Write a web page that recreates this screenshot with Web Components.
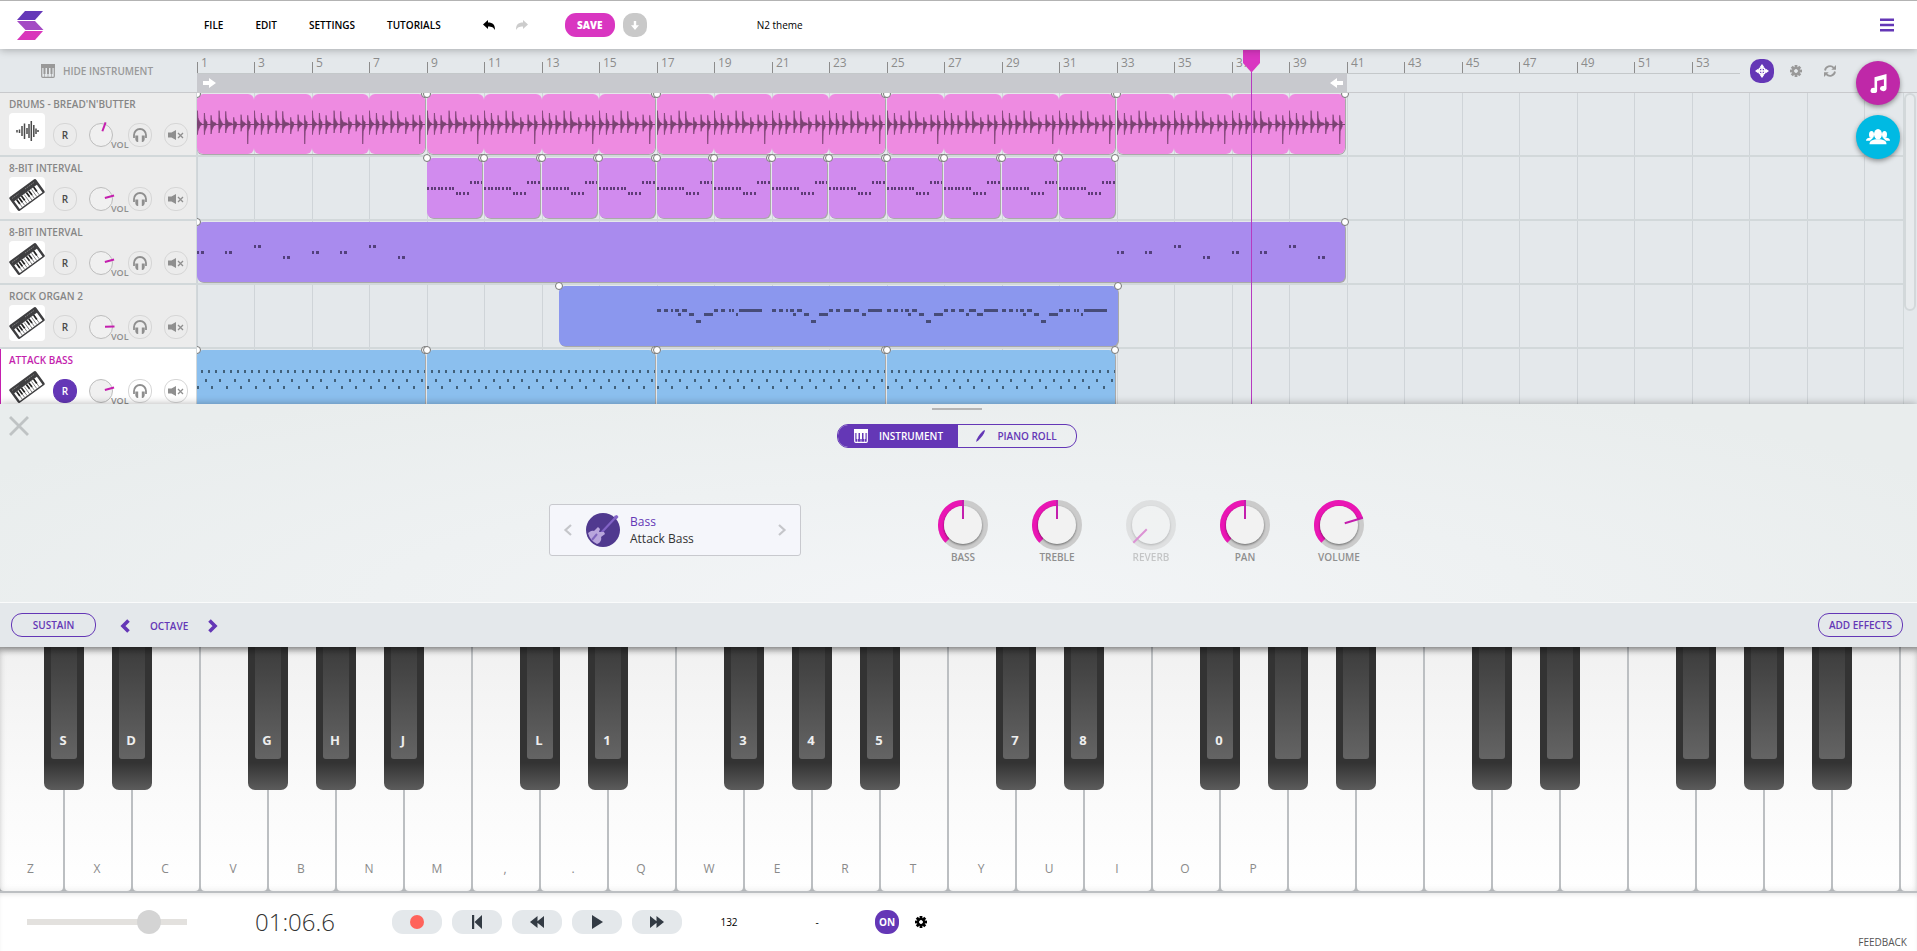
<!DOCTYPE html>
<html lang="en">
<head>
<meta charset="utf-8">
<title>N2 theme</title>
<style>
  html, body { margin: 0; }
  body {
    --violet: #6437b6; --magenta: #d936c1; --line: #d2d8da; --surface: #e4e8eb;
    font: 600 10px/14px "Open Sans", "Noto Sans", sans-serif; color: #000; background: #fff;
  }
</style>
</head>
<body>
<daw-app></daw-app>
<script>
const base = `
  *, *::before { box-sizing: border-box; }
  button, input { font: inherit; color: inherit; background: none; border: 0; padding: 0; margin: 0; }
  button { cursor: pointer; }
  svg { display: block; }
`;

/* Defines an element whose shadow root is rendered once from its attributes. */
function define(name, css, render) {
  customElements.define(name, class extends HTMLElement {
    connectedCallback() {
      if (this.shadowRoot) return;
      const root = this.attachShadow({ mode: 'open' });
      const tpl = document.createElement('template');
      tpl.innerHTML = `<style>${base}${css}</style>${render(this)}`;
      root.append(tpl.content.cloneNode(true));
    }
  });
}

/* ---------- icons ---------- */
const gear = (r) => {
  let teeth = '';
  for (let a = 0; a < 360; a += 45) teeth += `<rect x="-1.4" y="-6" width="2.8" height="4" transform="rotate(${a})"/>`;
  return `<g transform="translate(6 6)">${teeth}<circle r="${r}" fill="none" stroke="currentColor" stroke-width="2"/></g>`;
};
const icons = {
  logo: [27, 29, `<path fill="#6538b8" d="M8 0h18l-8 9H0z"/><path fill="#a44ac4" d="M0 10h18l8.500 9h-18z"/><path fill="#d936bb" d="M8 20h18l-8 9H0z"/>`],
  undo: [12, 10, `<path d="M5 0v2.500c5 0 7 2 7 7.500-1.500-2.500-3-3.600-7-3.600V9L0 4.500z"/>`],
  redo: [12, 10, `<path d="M7 0v2.500C2 2.500 0 4.500 0 10c1.500-2.500 3-3.600 7-3.600V9l5-4.500z"/>`],
  down: [8, 9, `<path d="M2.800 0h2.400v4.200H8L4 9 0 4.200h2.800z"/>`],
  bars: [14, 14, `<path d="M0 .5h14v2.500H0zM0 5.700h14v2.500H0zM0 11h14v2.500H0z"/>`],
  keys: [14, 14, `<rect x=".7" y=".7" width="12.600" height="12.600" rx="1" fill="none" stroke="currentColor" stroke-width="1.200"/><path d="M0 0h14v4H0zM2.500 4h2v6h-2zM6 4h2v6H6zM9.500 4h2v6h-2z"/><path d="M3.500 9v4M7 9v4M10.500 9v4" stroke="currentColor" stroke-width=".6"/>`],
  right: [13, 10, `<path d="M0 3h6V0l7 5-7 5V7H0z"/>`],
  left: [13, 10, `<path d="M13 3H7V0L0 5l7 5V7h6z"/>`],
  wave: [36, 36, `<g stroke="#4a4a4a" stroke-width="1.500" fill="none"><path d="M8 17v2.500M10.500 16.500V20M13 13v10M15.500 10.500V26M18 15v6M20 11v14M22.300 8v20M24.800 12v12M27 15.500V21M29 17v2"/></g>`],
  synth: [36, 36, `<g transform="rotate(-36 18 18)"><rect x="1.500" y="9.500" width="33" height="17" rx="1.500" fill="#3e3e40"/><rect x="4" y="15.500" width="28" height="9.500" fill="#fff"/><path stroke="#3e3e40" stroke-width=".6" d="M7 16v9M10 16v9M13 16v9M16 16v9M19 16v9M22 16v9M25 16v9M28 16v9"/><path stroke="#222" stroke-width="1.700" d="M7 15.500V21M10 15.500V21M13 15.500V21M19 15.500V21M22 15.500V21M28 15.500V21"/><path stroke="#999" stroke-width=".7" d="M4 12h8M20 12h11" stroke-dasharray="1.500 1"/></g>`],
  phones: [14, 14, `<path fill="none" stroke="currentColor" stroke-width="1.800" d="M1 10V7a6 6 0 0 1 12 0v3"/><path d="M2.300 7.500h2.900V14H4.600C3.300 14 2.300 12.500 2.300 11zM11.700 7.500H8.800V14h.6c1.300 0 2.300-1.500 2.300-3z"/>`],
  mute: [16, 10, `<path d="M0 2.500h3.500L8 0v10L3.500 7.500H0z"/><path stroke="currentColor" stroke-width="1.300" d="M10 3l5 5M15 3l-5 5"/>`],
  target: [14, 14, `<circle cx="7" cy="7" r="3.200" fill="none" stroke="currentColor" stroke-width="1.500"/><path d="M7 0l2 2.800-1.300 1.500v5.400L9 11.200 7 14l-2-2.800 1.300-1.500V4.300L5 2.800z"/><path d="M0 7l2.800-2 1.500 1.300h5.400L11.200 5 14 7l-2.800 2-1.500-1.300H4.300L2.800 9z"/>`],
  gear: [12, 12, gear(3)],
  sync: [12, 12, `<path fill="none" stroke="currentColor" stroke-width="1.800" d="M1 5.500a5 5 0 0 1 8.700-2.600M11 6.500a5 5 0 0 1-8.700 2.600"/><path d="M12 0v4.800H7.300zM0 12V7.200h4.700z"/>`],
  music: [18, 19, `<path d="M5.500 3.200 17.500 0v14.200a3.300 2.600 0 1 1-2.600-2.200V5.200L8.100 7v9.200a3.300 2.600 0 1 1-2.600-2.300z"/>`],
  group: [24, 16, `<ellipse cx="12" cy="5.200" rx="4" ry="5.200"/><path d="M3.500 15.200c0-3.600 3-5 8.500-5s8.500 1.400 8.500 5z"/><ellipse cx="5.500" cy="5.500" rx="2.500" ry="3.600"/><path d="M0 11.800c0-2 2-3.200 6-3.200h1.500L4 11.800z"/><ellipse cx="18.500" cy="5.500" rx="2.500" ry="3.600"/><path d="M24 11.800c0-2-2-3.200-6-3.200h-1.500l3.500 3.200z"/>`],
  close: [20, 20, `<path stroke="currentColor" stroke-width="2.800" stroke-linecap="square" d="M2 2l16 16M18 2L2 18"/>`],
  pen: [9, 12, `<path d="M8.300 0l.7.800C8 4 5.500 7.500 2.500 10.200L0 12l.8-2.800C2.500 5.500 5.500 2 8.300 0z"/>`],
  prev: [8, 12, `<path fill="none" stroke="currentColor" stroke-width="2.200" d="M7 1L1.500 6 7 11"/>`],
  next: [8, 12, `<path fill="none" stroke="currentColor" stroke-width="2.200" d="M1 1l5.500 5L1 11"/>`],
  octdown: [10, 14, `<path fill="none" stroke="currentColor" stroke-width="3.600" d="M8.500 1.500L3 7l5.500 5.500"/>`],
  octup: [10, 14, `<path fill="none" stroke="currentColor" stroke-width="3.600" d="M1.500 1.500L7 7l-5.500 5.500"/>`],
  bass: [34, 34, `<circle cx="17" cy="17" r="17" fill="#50398f"/><path d="M15 20L30 4" stroke="#8263c6" stroke-width="2.200"/><path d="M28 3l3-1 1.500 2-2.500 3z" fill="#8263c6"/><path fill="#b9a6dc" d="M2 20c2-1 3-3 6-2l4-4 2 2-1 3 5 0 1 2-4 3c1 3-1 6-4 7A17 17 0 0 1 2 20z"/><path d="M6 27l5-6" stroke="#8066bd" stroke-width="2"/>`],
  rec: [14, 14, `<circle cx="7" cy="7" r="7" fill="#ff635b"/>`],
  start: [10, 14, `<path d="M0 0h2.200v14H0zM10 0v14L2.500 7z"/>`],
  rew: [14, 14, `<path d="M7.500 1v12L0 7zM14 1v12L6.500 7z"/>`],
  play: [12, 14, `<path d="M1 0v14L12 7z"/>`],
  ffwd: [14, 14, `<path d="M0 1v12l7.500-6zM6.500 1v12L14 7z"/>`],
};
define('ui-icon', `:host { display: block; flex: none; } svg { fill: currentColor; overflow: visible; }`, el => {
  const [w, h, art] = icons[el.getAttribute('name')];
  return `<svg width="${w}" height="${h}" viewBox="0 0 ${w} ${h}" aria-hidden="true">${art}</svg>`;
});

/* ---------- header ---------- */
define('app-header', `
  :host { display: flex; align-items: center; height: 49px; background: #fff; border-top: 1px solid #b3b3b3;
          box-shadow: 0 1px 8px rgba(0,0,0,.28); position: relative; z-index: 5; padding: 0 23px 0 17px; }
  .brand { width: 187px; }
  nav { display: flex; gap: 32px; }
  a { color: #000; text-decoration: none; }
  .history { display: flex; gap: 21px; margin: 0 37px 0 42px; }
  .redo { color: #ccc; }
  .save { width: 50px; height: 24px; border-radius: 11px; background: var(--magenta); color: #fff; font-weight: 800; }
  .get { width: 24px; height: 24px; margin-left: 8px; border-radius: 10px; background: #c9c9c9; color: #fff; display: grid; place-items: center; }
  input { width: 200px; margin-left: 110px; font-weight: 400; }
  .menu { margin-left: auto; color: var(--violet); }
`, () => `
  <div class="brand"><ui-icon name="logo"></ui-icon></div>
  <nav><a href="#file">FILE</a><a href="#edit">EDIT</a><a href="#settings">SETTINGS</a><a href="#tutorials">TUTORIALS</a></nav>
  <div class="history"><button aria-label="Undo"><ui-icon name="undo"></ui-icon></button><button class="redo" aria-label="Redo"><ui-icon name="redo"></ui-icon></button></div>
  <button class="save">SAVE</button>
  <button class="get" aria-label="Download"><ui-icon name="down"></ui-icon></button>
  <input type="text" value="N2 theme" aria-label="Project title">
  <button class="menu" aria-label="Menu"><ui-icon name="bars"></ui-icon></button>
`);

/* ---------- ruler: two bars take 57px and 58px in turn ---------- */
define('time-ruler', `
  :host { display: flex; height: 44px; background: var(--surface); }
  .hide { width: 197px; display: flex; align-items: center; justify-content: center; gap: 8px; color: #999;
          border-bottom: 1px solid #c8c9cc; padding-right: 3px; }
  .scale { flex: 1; min-width: 0; overflow: hidden; border-bottom: 1px solid #c8c9cc; }
  .bars { display: grid; grid-template-columns: repeat(14, 57px 58px); height: 25px; border-bottom: 1px solid #c4c8ca; }
  .bars span { border-left: 1px solid transparent; padding: 6px 0 0 3px; font: 400 12px/16px "Open Sans", sans-serif; color: #8c8c8c;
               background: linear-gradient(#8c8c8c, #8c8c8c) 0 100% / 1px 11px no-repeat; background-origin: border-box; }
  .loop { width: 1150px; height: 18px; background: #c8c9ce; color: #fff; display: flex; justify-content: space-between; align-items: center; padding: 0 4px 0 6px; }
  .tools { width: 177px; display: flex; gap: 15px; padding: 10px 0 0 10px; color: #999; border-bottom: 1px solid #c8c9cc; }
  .tools button { width: 24px; height: 24px; margin-right: -5px; display: grid; place-items: center; }
  .tools .on { background: var(--violet); color: #fff; border-radius: 10px; }
`, () => {
  let bars = '';
  for (let n = 1; n <= 53; n += 2) bars += `<span>${n}</span>`;
  return `
  <button class="hide"><ui-icon name="keys"></ui-icon>HIDE INSTRUMENT</button>
  <div class="scale"><div class="bars">${bars}</div><div class="loop"><ui-icon name="right"></ui-icon><ui-icon name="left"></ui-icon></div></div>
  <div class="tools"><button class="on" aria-label="Snap"><ui-icon name="target"></ui-icon></button><button aria-label="Timeline settings"><ui-icon name="gear"></ui-icon></button><button aria-label="Loop"><ui-icon name="sync"></ui-icon></button></div>`;
});

/* ---------- track header ---------- */
define('track-head', `
  :host { display: block; width: 197px; height: 64px; background: #ececec; border-bottom: 2px solid var(--line);
          border-right: 1px solid var(--line); padding: 4px 0 0 9px; color: #868686; box-sizing: border-box; }
  :host([selected]) { background: #fff; box-shadow: inset 1px 0 #c41fae; color: #c41fae; }
  .row { display: flex; align-items: flex-start; margin-top: 2px; color: #8f8f8f; }
  .pic { background: #fff; border-radius: 4px; margin-right: 8px; }
  button, .dial { width: 24px; height: 24px; border-radius: 11px; border: 1px solid #d6d6d6; display: grid; place-items: center; margin-top: 10px; }
  .rec { color: #4a4a4a; }
  :host([selected]) .rec { background: var(--violet); border-color: var(--violet); color: #fff; }
  .dial { border: 0; margin-left: 12px; position: relative; }
  .dial svg { overflow: visible; }
  .dial input { position: absolute; inset: 0; width: 24px; opacity: 0; }
  .vol { font: 600 9px/10px "Open Sans", sans-serif; margin: 27px -1px 0 -2px; width: 18px; }
  .mute { margin-left: 12px; }
`, el => `
  <div>${el.getAttribute('name')}</div>
  <div class="row">
    <ui-icon class="pic" name="${el.getAttribute('icon')}"></ui-icon>
    <button class="rec" aria-label="Record arm">R</button>
    <div class="dial">
      <svg width="24" height="24" viewBox="-12 -12 24 24"><circle r="11.500" fill="#f0f0f0" stroke="#bdbdbd"/><path d="M0-4V-13.500" stroke="#c41fae" stroke-width="2" transform="rotate(${el.getAttribute('angle')})"/></svg>
      <input id="vol" type="range" min="-135" max="135" value="${el.getAttribute('angle')}">
    </div>
    <label class="vol" for="vol">VOL</label>
    <button aria-label="Solo"><ui-icon name="phones"></ui-icon></button>
    <button class="mute" aria-label="Mute"><ui-icon name="mute"></ui-icon></button>
  </div>`);

/* ---------- clips ---------- */
const hits = [[0,40,32,14],[21,33,32,9],[41,26,30,16],[65,40,27,12],[85,38,27,20],[109,20,30,10],[131,28,22,14],[151,26,60,8]];
function beat() {
  let d = '';
  for (const [x, up, down, tail] of hits) {
    const a = x / 3, e = (x + tail) / 3, f = Math.min(down, 32);
    d += `M${a} 30L${a + .4} ${30 - up / 3}l.5 ${up / 6}L${a + 1.6} ${30 - up / 9}L${a + 3} 28.300L${e} 29.300V30.700L${a + 3} 32L${a + 1.600} ${30 + f / 6}L${a + .9} ${30 + f / 4.500}L${a + .4} ${30 + down / 3}z`;
  }
  return `<svg width="58" height="60"><path d="M0 30.500h58" stroke="#7b4373" stroke-width="1"/><path d="${d}" fill="#7b4373" stroke="#7b4373" stroke-width=".7"/></svg>`;
}
const notes = (w, list, fill) => `<svg width="${w}" height="60" fill="${fill}">${list.map(([x, y, n]) => `<rect x="${x}" y="${y}" width="${n}" height="3"/>`).join('')}</svg>`;
const art = {
  riff: () => notes(56, Array.from({ length: 16 }, (_, i) => [Math.round(i * 3.6), i < 8 ? 29 : i < 12 ? 34 : 23, 2]), '#5f3b77'),
  pairs: () => {
    const out = [];
    [0, 920].forEach(o => [29, 29, 23, 34, 29, 29, 23, 34].forEach((y, i) => {
      const x = o + Math.floor(i * 28.750); out.push([x, y, 2], [x + 4, y, 3]);
    }));
    return notes(1148, out, '#53407c');
  },
  organ: () => {
    const head = [[0,9,0],[16,25,0],[32,36,0],[41,49,0],[48,55,1],[56,68,0],[72,84,1],[88,100,2],[106,127,1],[128,138,0],[144,154,0]];
    const tailA = [[162,165,0],[168,173,0],[177,182,1],[184,236,0]];
    const tails = [tailA, [[161,177,0],[184,195,0],[202,211,1],[216,248,0]], [[162,174,0],[178,185,1],[184,200,0],[202,215,1],[218,250,0]], tailA];
    const out = [];
    tails.forEach((t, p) => [...head, ...t].forEach(([a, b, r]) =>
      out.push([Math.round(98 + p * 115 + a * .446), [23, 27, 34][r], Math.max(2, Math.round((b - a) * .446))])));
    return notes(559, out, '#474c78');
  },
  bass: () => {
    const out = [];
    for (let i = 0; i < 32; i++) out.push([Math.round(4 + i * 7.187), 20, 2]);
    for (let i = 0; i < 16; i++) out.push([Math.round(8 + i * 14.375), 29, 2], [Math.round(i * 14.375), 36, 2]);
    return notes(229, out, '#41607a');
  },
};
define('sound-clip', `
  :host { display: block; height: 60px; position: relative; min-width: 0; margin-right: 2px; }
  .body { height: 60px; border-radius: 6px; background: var(--tint); box-shadow: 1px 1px 0 #a9a9a9; overflow: hidden; }
  :host([kind=bass]) .body { border-radius: 6px 6px 0 0; }
  :host([kind=drums]) .body { display: grid; grid-template-columns: 57px 58px 57px 1fr; background: none; box-shadow: 0 1px 0 #a9a9a9, 1px 0 0 #a9a9a9; }
  .part { background: var(--tint); border-radius: 6px; overflow: hidden; }
  i { position: absolute; top: -4px; width: 8px; height: 8px; border-radius: 50%; background: #fff; border: 1px solid #777; z-index: 1; }
  .a { left: -4px; } .b { right: -4px; }
`, el => {
  const kind = el.getAttribute('kind');
  const inner = kind === 'drums' ? `<div class="part">${beat()}</div>`.repeat(4) : art[kind]();
  return `<div class="body">${inner}</div><i class="a"></i><i class="b"></i>`;
});
define('clip-lane', `
  :host { display: grid; grid-template-columns: repeat(15, 57px 58px); height: 64px; padding-top: 1px; border-bottom: 2px solid var(--line); box-sizing: border-box; }
`, () => `<slot></slot>`);

/* ---------- arrangement ---------- */
define('track-board', `
  :host { display: flex; flex: 1 1 0; min-height: 0; overflow: hidden; background: var(--surface); }
  .heads { flex: none; }
  .lanes { flex: 1; min-width: 0; overflow: hidden;
    background: linear-gradient(90deg, #cfd4d8 1px, transparent 1px 57px, #cfd4d8 57px 58px, transparent 58px) 0 0 / 115px 100%; }
  sound-clip { grid-column: var(--at) / span var(--len); }
  .late { margin-left: 17px; margin-right: -1px; }
  .scroll { width: 14px; border-left: 1px solid var(--line); padding: 0 1px 0 0; }
  .thumb { height: 218px; border: 2px solid #d3d8da; border-radius: 6px; background: #e8ebed; }
`, () => {
  const clips = (kind, tint, start, len, count) => Array.from({ length: count }, (_, i) =>
    `<sound-clip kind="${kind}" style="--tint:${tint};--at:${start + i * len};--len:${len}"></sound-clip>`).join('');
  return `
  <div class="heads">
    <track-head name="DRUMS - BREAD'N'BUTTER" icon="wave" angle="20"></track-head>
    <track-head name="8-BIT INTERVAL" icon="synth" angle="75"></track-head>
    <track-head name="8-BIT INTERVAL" icon="synth" angle="75"></track-head>
    <track-head name="ROCK ORGAN 2" icon="synth" angle="88"></track-head>
    <track-head name="ATTACK BASS" icon="synth" angle="75" selected></track-head>
  </div>
  <div class="lanes">
    <clip-lane>${clips('drums', '#ee8be1', 1, 4, 5)}</clip-lane>
    <clip-lane>${clips('riff', '#d18bee', 5, 1, 12)}</clip-lane>
    <clip-lane>${clips('pairs', '#a98bee', 1, 20, 1)}</clip-lane>
    <clip-lane><sound-clip class="late" kind="organ" style="--tint:#8b97ee;--at:7;--len:10"></sound-clip></clip-lane>
    <clip-lane>${clips('bass', '#8bbfee', 1, 4, 4)}</clip-lane>
  </div>
  <div class="scroll"><div class="thumb"></div></div>`;
});
define('tracker-view', `
  :host { display: flex; flex-direction: column; flex: 1 1 0; min-height: 300px; position: relative; overflow: hidden; }
  .playhead { position: absolute; left: 1243px; top: 0; bottom: 0; width: 17px; display: flex; flex-direction: column; align-items: center; z-index: 2; pointer-events: none; }
  .playhead svg { flex: none; }
  .playhead::after { content: ""; flex: 1; width: 1px; background: #b63ac0; }
  .fabs { position: absolute; right: 17px; top: 12px; display: grid; gap: 10px; z-index: 3; }
  .fabs button { width: 44px; height: 44px; border-radius: 50%; background: #bf28a8; color: #fff; display: grid; place-items: center; box-shadow: 0 2px 5px rgba(0,0,0,.4); }
  .fabs .people { background: #00bae3; }
`, () => `
  <time-ruler></time-ruler>
  <track-board></track-board>
  <div class="playhead"><svg width="17" height="23"><path fill="#d936c1" d="M0 1h17v13L9 23H8L0 14z"/></svg></div>
  <div class="fabs"><button aria-label="Loop library"><ui-icon name="music"></ui-icon></button><button class="people" aria-label="Collaborators"><ui-icon name="group"></ui-icon></button></div>
`);

/* ---------- instrument panel ---------- */
define('param-knob', `
  :host { display: block; width: 50px; text-align: center; color: #8f8f8f; }
  :host([disabled]) { opacity: .45; }
  label { display: block; position: relative; }
  svg { overflow: visible; }
  input { position: absolute; inset: 0 0 auto; width: 50px; height: 50px; opacity: 0; }
  span { display: block; line-height: 14px; }
`, el => {
  const a = +el.getAttribute('angle'), p = d => `${(22 * Math.sin(d * Math.PI / 180)).toFixed(2)} ${(-22 * Math.cos(d * Math.PI / 180)).toFixed(2)}`;
  const arc = a > -135 ? `<path d="M${p(-135)}A22 22 0 ${a + 135 > 180 ? 1 : 0} 1 ${p(a)}" fill="none" stroke="#ea16b4" stroke-width="6"/>` : '';
  return `<label>
    <svg width="50" height="50" viewBox="-25 -25 50 50">
      <circle r="22" fill="none" stroke="#cbcbcb" stroke-width="6"/>${arc}
      <circle r="19" fill="#f2f2f2" style="filter:drop-shadow(0 1px 1px rgba(0,0,0,.5))"/>
      <path d="M0-6V-25" stroke="#c41fae" stroke-width="2" transform="rotate(${a})"/>
    </svg>
    <input type="range" min="-135" max="135" value="${a}" ${el.hasAttribute('disabled') ? 'disabled' : ''}>
    <span><slot></slot></span></label>`;
});
define('instrument-panel', `
  :host { display: grid; grid-template-rows: 198px 45px; position: relative; z-index: 2; box-shadow: 0 0 8px rgba(0,0,0,.3); }
  .top { background: radial-gradient(ellipse 60% 120% at 50% 100%, #f3f5f7, #e9eded); position: relative; display: flex; flex-direction: column; align-items: center; padding-right: 4px; }
  .grip { width: 50px; height: 2px; margin-top: 4px; background: #b5b5b5; }
  .close { position: absolute; left: 9px; top: 12px; color: #bfc3c4; }
  .tabs { display: flex; width: 240px; height: 24px; margin-top: 14px; border: 1px solid var(--violet); border-radius: 11px; overflow: hidden; color: var(--violet); }
  .tabs button { flex: 1; display: flex; align-items: center; justify-content: center; gap: 12px; }
  .tabs .on { background: var(--violet); color: #fff; gap: 11px; padding-left: 2px; }
  .main { display: flex; align-items: flex-start; margin-top: 52px; }
  .preset { display: flex; align-items: center; width: 252px; height: 52px; margin: 4px 137px 0 0; border: 1px solid #c8c9ce; border-radius: 3px; background: #f5f6fb; padding: 0 14px; color: #c5c6ca; }
  .preset div { flex: 1; font: 400 12px/17px "Open Sans", sans-serif; color: #333; margin-left: 10px; }
  .preset b { display: block; font-weight: 500; color: var(--violet); }
  .pic { margin-left: 14px; }
  .knobs { display: flex; gap: 44px; }
  .bar { background: var(--surface); border-top: 1px solid #fafbfb; display: flex; align-items: center; padding: 0 14px 0 11px; color: var(--violet); }
  .pill { width: 85px; height: 24px; border: 1px solid var(--violet); border-radius: 11px; }
  .oct { display: flex; align-items: center; gap: 20px; margin: 2px auto 0 24px; }
`, () => `
  <div class="top">
    <div class="grip"></div>
    <button class="close" aria-label="Close"><ui-icon name="close"></ui-icon></button>
    <div class="tabs"><button class="on"><ui-icon name="keys"></ui-icon>INSTRUMENT</button><button><ui-icon name="pen"></ui-icon>PIANO ROLL</button></div>
    <div class="main">
      <div class="preset"><button aria-label="Previous preset"><ui-icon name="prev"></ui-icon></button><ui-icon class="pic" name="bass"></ui-icon><div><b>Bass</b>Attack Bass</div><button aria-label="Next preset"><ui-icon name="next"></ui-icon></button></div>
      <div class="knobs">
        <param-knob angle="0">BASS</param-knob><param-knob angle="0">TREBLE</param-knob><param-knob angle="-135" disabled>REVERB</param-knob><param-knob angle="0">PAN</param-knob><param-knob angle="73">VOLUME</param-knob>
      </div>
    </div>
  </div>
  <div class="bar">
    <button class="pill">SUSTAIN</button>
    <div class="oct"><button aria-label="Octave down"><ui-icon name="octdown"></ui-icon></button><span>OCTAVE</span><button aria-label="Octave up"><ui-icon name="octup"></ui-icon></button></div>
    <button class="pill">ADD EFFECTS</button>
  </div>
`);

/* ---------- keyboard: every white key may carry the black key on its right ---------- */
define('piano-keys', `
  :host { display: flex; height: 246px; box-sizing: border-box; overflow: hidden; background: #bcbfc2; padding-bottom: 2px; position: relative; }
  :host::before { content: ""; position: absolute; inset: 0 0 2px; box-shadow: inset 0 6px 7px -3px rgba(0,0,0,.3), inset 0 0 8px -1px rgba(0,0,0,.12); z-index: 2; pointer-events: none; }
  .slot { flex: none; width: 68px; padding-right: 2px; position: relative; font: 400 12px/16px "Open Sans", sans-serif; }
  .slot:first-of-type { width: 65px; }
  .white { width: 100%; height: 100%; border-radius: 0 0 4px 4px; background: linear-gradient(#f1f1f1, #fbfbfb 65%, #fff); color: #8a8a8a; display: flex; align-items: flex-end; justify-content: center; padding: 0 2px 14px 0; }
  .black { position: absolute; right: -19px; top: 0; width: 40px; height: 143px; z-index: 1; border-radius: 0 0 7px 7px; background: linear-gradient(#333 116px, #5c5c5c); padding: 0 7px 31px 7px; }
  .black span { display: flex; align-items: flex-end; justify-content: center; height: 112px; border-radius: 0 0 3px 3px; background: linear-gradient(#3c3c3c, #646464); color: #eee; font: 700 13px/18px "Open Sans", sans-serif; padding: 0 2px 10px 0; }
`, () => {
  const white = ['Z','X','C','V','B','N','M',',','.','Q','W','E','R','T','Y','U','I','O','P'];
  const black = ['S','D','G','H','J','L','1','3','4','5','7','8','0'];
  let html = '', b = 0;
  for (let i = 0; i < 29; i++) {
    const sharp = ![2, 6].includes(i % 7) && i < 28;
    const label = white[i] || '';
    html += `<div class="slot"><button class="white" aria-label="White key ${i + 1}">${label}</button>` +
      (sharp ? `<button class="black" aria-label="Black key ${b + 1}"><span>${black[b++] || ''}</span></button>` : '') + `</div>`;
  }
  return html;
});

/* ---------- transport ---------- */
define('transport-bar', `
  :host { display: flex; align-items: flex-start; height: 58px; box-sizing: border-box; background: #fff; padding: 17px 10px 0 27px; box-shadow: inset 0 3px 5px -2px rgba(0,0,0,.12); }
  .master { -webkit-appearance: none; appearance: none; width: 160px; height: 24px; background: linear-gradient(#e3e1de, #e3e1de) 0 50% / 100% 6px no-repeat; }
  .master::-webkit-slider-thumb { -webkit-appearance: none; width: 24px; height: 24px; border-radius: 50%; background: #d4d4d4; border: 0; }
  .time { font: 300 24px/24px "Open Sans", sans-serif; color: #333; width: 137px; margin-left: 68px; }
  .keys { display: flex; gap: 10px; color: #333b44; }
  .keys button { width: 50px; height: 24px; border-radius: 11px; background: var(--surface); display: grid; place-items: center; }
  .field { font-weight: 400; height: 24px; width: 60px; text-align: center; }
  .tempo { margin-left: 17px; }
  .sig { margin-left: 28px; margin-right: 28px; }
  .on { width: 24px; height: 24px; border-radius: 11px; background: var(--violet); color: #fff; font-weight: 700; }
  .set { margin: 6px 0 0 16px; }
  a { margin: 25px 0 0 auto; color: #555; font-weight: 400; text-decoration: none; }
`, () => `
  <input class="master" type="range" min="0" max="100" value="81" aria-label="Master volume">
  <div class="time">01:06.6</div>
  <div class="keys">
    <button aria-label="Record"><ui-icon name="rec"></ui-icon></button><button aria-label="To start"><ui-icon name="start"></ui-icon></button><button aria-label="Rewind"><ui-icon name="rew"></ui-icon></button><button aria-label="Play"><ui-icon name="play"></ui-icon></button><button aria-label="Forward"><ui-icon name="ffwd"></ui-icon></button>
  </div>
  <input class="field tempo" type="text" value="132" aria-label="Tempo">
  <input class="field sig" type="text" value="-" aria-label="Key">
  <button class="on">ON</button>
  <button class="set" aria-label="Metronome settings"><ui-icon name="gear"></ui-icon></button>
  <a href="#feedback">FEEDBACK</a>
`);

define('daw-app', `:host { display: flex; flex-direction: column; min-height: 100vh; overflow: hidden; }`, () => `
  <app-header></app-header><tracker-view></tracker-view><instrument-panel></instrument-panel><piano-keys></piano-keys><transport-bar></transport-bar>
`);
</script>
</body>
</html>
